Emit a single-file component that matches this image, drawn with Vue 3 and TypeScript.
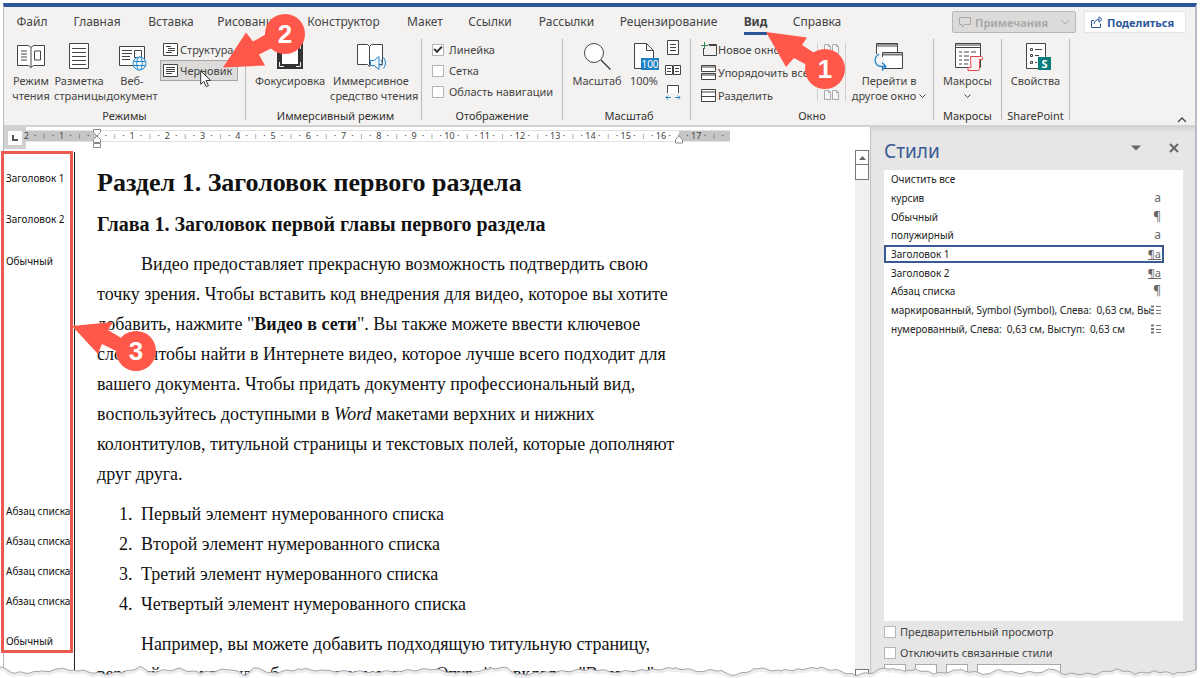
<script setup lang="ts">
import { ref } from 'vue'

interface StyleEntry { name: string; mark: 'none' | 'char' | 'para' | 'linked' | 'list' }

const tabs: string[] = ['Файл', 'Главная', 'Вставка', 'Рисование', 'Конструктор', 'Макет', 'Ссылки', 'Рассылки', 'Рецензирование', 'Вид', 'Справка']
const activeTab = ref('Вид')
const selectedStyle = ref('Заголовок 1')

const styles: StyleEntry[] = [
  { name: 'Очистить все', mark: 'none' },
  { name: 'курсив', mark: 'char' },
  { name: 'Обычный', mark: 'para' },
  { name: 'полужирный', mark: 'char' },
  { name: 'Заголовок 1', mark: 'linked' },
  { name: 'Заголовок 2', mark: 'linked' },
  { name: 'Абзац списка', mark: 'para' },
  { name: 'маркированный, Symbol (Symbol), Слева:  0,63 см, Вы', mark: 'list' },
  { name: 'нумерованный, Слева:  0,63 см, Выступ:  0,63 см', mark: 'list' },
]

const listItems: string[] = ['Первый', 'Второй', 'Третий', 'Четвертый']

// Four marks per centimetre, starting two centimetres left of zero.
const ruler = Array.from({ length: 80 }, (_, i) => {
  if (i % 4 === 0) return i === 8 ? '' : String(Math.abs((i - 8) / 4))
  return i % 4 === 2 ? '|' : '·'
})

const tearAnchors: [number, number][] = [
  [0, 667], [15, 673], [40, 672], [62, 669], [75, 670], [105, 674], [125, 672], [140, 667], [150, 672], [180, 669],
  [200, 673], [230, 669], [245, 675], [255, 668], [272, 673], [300, 669], [325, 671], [375, 672], [400, 671], [433, 669],
  [455, 673], [480, 672], [490, 668], [508, 668], [517, 675], [540, 673], [570, 671], [590, 669], [615, 672], [650, 670],
  [675, 668], [700, 671], [722, 670], [730, 675], [745, 673], [755, 668], [780, 671], [800, 669], [820, 668], [835, 670],
  [855, 675], [870, 673], [885, 668], [895, 669], [905, 672], [915, 669], [935, 674], [960, 670], [985, 674], [1000, 670],
  [1015, 673], [1040, 672], [1050, 669], [1065, 674], [1095, 674], [1118, 669], [1135, 674], [1155, 671], [1175, 674], [1188, 671], [1200, 669],
]
const tearLine = (() => {
  const pts: string[] = []
  for (let k = 0; k < tearAnchors.length - 1; k++) {
    const [x0, y0] = tearAnchors[k]
    const [x1, y1] = tearAnchors[k + 1]
    for (let x = x0; x < x1; x += 3) {
      const y = y0 + ((y1 - y0) * (x - x0)) / (x1 - x0) + Math.sin(x * 1.7) * 0.9 - 660
      pts.push(`${x} ${y.toFixed(1)}`)
    }
  }
  return pts.join(' L')
})()
</script>

<template>
  <div class="page">
    <div class="window">
      <header class="titlebar">
        <nav class="tabs">
          <button v-for="t in tabs" :key="t" type="button" class="tab" :class="{ active: t === activeTab }" @click="activeTab = t"><span>{{ t }}</span></button>
        </nav>
        <div class="actions">
          <button type="button" class="comments" disabled>
            <svg width="12" height="12" viewBox="0 0 12 12" fill="none" stroke="#aaa"><path d="M.5 1.500h11v7h-6l-2.500 2.500v-2.500h-2.500z" /></svg>
            Примечания
            <svg width="10" height="6" viewBox="0 0 10 6" fill="none" stroke="#aaa"><path d="M1 1l4 4 4-4" /></svg>
          </button>
          <button type="button" class="share">
            <svg width="12" height="12" viewBox="0 0 12 12" fill="none" stroke="#2b579a"><path d="M3 4.500h-2.500v7h9v-4M3 8c.5-3 2-4.500 5-4.500M8 .8l3 2.700-3 2.700z" /></svg>
            Поделиться
          </button>
        </div>
      </header>

      <div class="ribbon">
        <section class="group modes">
          <div class="tools">
            <button type="button" class="big">
              <svg width="30" height="30" viewBox="0 0 30 30" fill="none" stroke="#444"><path fill="#fff" d="M1.500 4.500h11l2.500 2 2.500-2h11v20h-11l-2.500 2-2.500-2h-11zM15 6.500v20" /><path d="M5 10h6M5 13h6M5 16h6M5 19h6M18.500 10h6v9h-6z" /></svg>
              Режим<br>чтения
            </button>
            <button type="button" class="big">
              <svg width="30" height="30" viewBox="0 0 30 30" fill="none" stroke="#444"><path fill="#fff" d="M5.500 2.500h19v25h-19z" /><path d="M8 7.500h14M8 11.500h14M8 15.500h14M8 19.500h14M8 23.500h14" /></svg>
              Разметка<br>страницы
            </button>
            <button type="button" class="big">
              <svg width="30" height="30" viewBox="0 0 30 30" fill="none" stroke="#444"><path fill="#fff" d="M2.500 5.500h25v19h-25z" /><path d="M5 9.500h10M5 12.500h10M5 15.500h8M5 18.500h8M17.500 9.500h7v7h-7z" /><g stroke="#2386cc" fill="#f2f7fb"><circle cx="22.500" cy="22.500" r="6.500" /><ellipse cx="22.500" cy="22.500" rx="2.800" ry="6.500" /><path d="M16.500 20.500h12M16.500 24.500h12" /></g></svg>
              Веб-<br>документ
            </button>
            <div class="stack">
              <button type="button" class="small">
                <svg width="16" height="14" viewBox="0 0 16 14" fill="none" stroke="#444"><path fill="#fff" d="M.5.5h14v12H.5z" /><path d="M3 3.500h5M5 5.500h7M5 7.500h7M3 9.500h6" /></svg>
                Структура
              </button>
              <button type="button" class="small pressed">
                <svg width="16" height="14" viewBox="0 0 16 14" fill="none" stroke="#444"><path fill="#fff" d="M.5.5h14v12H.5z" /><path d="M3 3.500h9M3 5.500h9M3 7.500h9M3 9.500h6" /></svg>
                Черновик
              </button>
            </div>
          </div>
          <h2>Режимы</h2>
        </section>

        <section class="group immersive">
          <div class="tools">
            <button type="button" class="big">
              <svg width="30" height="30" viewBox="0 0 30 30"><path fill="#333" d="M2 2h26v26H2z" /><path fill="#fff" d="M7 5h16v18H7z" /><path d="M4.500 21v4.500H9M25.500 21v4.500H21M4.500 8V4.500M25.500 8V4.500" fill="none" stroke="#eee" /></svg>
              Фокусировка
            </button>
            <button type="button" class="big wide">
              <svg width="30" height="30" viewBox="0 0 30 30" fill="none" stroke="#444"><path fill="#fff" d="M13.500 5.500l-2-2h-10v20h10l2 2 2-2h11v-20h-11z" /><path d="M13.500 5.500v19" /><path stroke="#2386cc" fill="#f2f7fb" d="M14.500 19.500h3.500l5-4v13l-5-4h-3.500z" /><path stroke="#2386cc" d="M25 18.500q2.500 3.500 0 7M27.500 16.500q4 5.500 0 11" /></svg>
              Иммерсивное<br>средство чтения
            </button>
          </div>
          <h2>Иммерсивный режим</h2>
        </section>

        <section class="group display">
          <div class="tools checks">
            <label><input type="checkbox" checked>Линейка</label>
            <label><input type="checkbox">Сетка</label>
            <label><input type="checkbox">Область навигации</label>
          </div>
          <h2>Отображение</h2>
        </section>

        <section class="group zooming">
          <div class="tools">
            <button type="button" class="big">
              <svg width="30" height="30" viewBox="0 0 30 30" fill="none" stroke="#444"><circle cx="12" cy="12" r="9.500" fill="#fff" /><path stroke-width="1.500" d="M19 19l9.500 9.500" /></svg>
              Масштаб
            </button>
            <button type="button" class="big">
              <svg width="30" height="30" viewBox="0 0 30 30"><path d="M5.500 2.500h12l7 7v18h-19zM17.500 2.500v7h7" fill="#fff" stroke="#444" /><path fill="#1e7fc2" d="M12 17h18v12H12z" /><text x="21" y="27" text-anchor="middle" font-size="10" fill="#fff">100</text></svg>
              100%
            </button>
            <div class="stack icons">
              <button type="button" aria-label="Одна страница"><svg width="16" height="16" viewBox="0 0 16 16" fill="none" stroke="#444"><path fill="#fff" d="M2.500.5h11v14h-11z" /><path d="M5 4.500h6M5 7.500h6M5 10.500h6" /></svg></button>
              <button type="button" aria-label="Несколько страниц"><svg width="16" height="16" viewBox="0 0 16 16" fill="none" stroke="#444"><path fill="#fff" d="M.5 3.500h7v9h-7zM8.500 3.500h7v9h-7z" /><path d="M2 6.500h4M2 9.500h4M10 6.500h4M10 9.500h4" /></svg></button>
              <button type="button" aria-label="По ширине страницы"><svg width="16" height="16" viewBox="0 0 16 16" fill="none" stroke="#444"><path fill="#fff" d="M2.500 9V1.500h11V9" /><path stroke="#2386cc" d="M1 13.500h5M10 13.500h5M3 11.500l-2 2 2 2M13 11.500l2 2-2 2" /></svg></button>
            </div>
          </div>
          <h2>Масштаб</h2>
        </section>

        <section class="group windows">
          <div class="tools">
            <div class="stack arrange">
              <button type="button" class="small">
                <svg width="16" height="15" viewBox="0 0 16 15" fill="none" stroke="#444"><path d="M2.500 6v7.500h13v-11h-8M8 3.500h7" /><path stroke="#2a8a4c" d="M3.500 0v7M0 3.500h7" /></svg>
                Новое окно
              </button>
              <button type="button" class="small">
                <svg width="16" height="15" viewBox="0 0 16 15" fill="#fff" stroke="#444"><path d="M.5.5h14v6H.5zM.5 8.500h14v6H.5zM1 2h13M1 10h13" /></svg>
                Упорядочить все
              </button>
              <button type="button" class="small">
                <svg width="16" height="15" viewBox="0 0 16 15" fill="#fff" stroke="#444"><path d="M.5 1.500h14v12H.5zM1 4h13M1 8.500h13" /></svg>
                Разделить
              </button>
            </div>
            <div class="stack compare">
              <button v-for="n in ['Рядом', 'Синхронная прокрутка', 'Восстановить расположение']" :key="n" type="button" :aria-label="n">
                <svg width="16" height="12" viewBox="0 0 16 12" fill="#f6f6f6" stroke="#aaa"><path d="M.5 1.500h4l2 2v7h-6zM8.500 1.500h4l2 2v7h-6zM4.500 1.500v2h2M12.500 1.500v2h2" /></svg>
              </button>
            </div>
            <button type="button" class="big switch">
              <svg width="30" height="30" viewBox="0 0 30 30" fill="none" stroke="#444"><path fill="#fff" d="M2.500 13V2.500h21v9M2.500 5h21" /><path d="M3 3.500h20" stroke="#888" /><path fill="#fff" d="M8.500 11.500h20v16h-20z" /><path stroke="#777" stroke-width="2" d="M9 13.500h19" /><path stroke="#f3f2f1" stroke-width="4" d="M8.500 16v9" /><path stroke="#2386cc" stroke-width="1.300" fill="none" d="M5 13c-6 4-5 12 3 12.500h4M8 21.500l4 4-4 4" /></svg>
              Перейти в<br>другое окно <svg class="chev" width="7" height="5" viewBox="0 0 7 5" fill="none" stroke="#444"><path d="M.5.5l3 3 3-3" /></svg>
            </button>
          </div>
          <h2>Окно</h2>
        </section>

        <section class="group narrow">
          <div class="tools">
            <button type="button" class="big">
              <svg width="30" height="30" viewBox="0 0 30 30" fill="none" stroke="#444"><path fill="#fff" d="M2.500 2.500h25v24h-25z" /><path d="M3 4h24M3 6.500h24M6 11h3M11 11h5M18 11h5M6 15h3M11 15h5M6 19h3M11 19h5M6 23h3M11 23h4" /><path fill="#fdf3f3" stroke="#dd4a50" d="M17.500 15.500h11q1.500 0 1 3h-3v9q0 2-2 2h-9.500v-3h3z" /></svg>
              Макросы<br><svg class="chev" width="7" height="5" viewBox="0 0 7 5" fill="none" stroke="#444"><path d="M.5.5l3 3 3-3" /></svg>
            </button>
          </div>
          <h2>Макросы</h2>
        </section>

        <section class="group narrow">
          <div class="tools">
            <button type="button" class="big">
              <svg width="30" height="30" viewBox="0 0 30 30" fill="none" stroke="#444"><path fill="#fff" d="M5.500 2.500h19v25h-19z" /><path d="M9.500 7.500h2v2h-2zM9.500 13.500h2v2h-2zM9.500 20.500h2v2h-2zM14 8.500h7M14 14.500h4M14 21.500h2" /><path fill="#087b7b" stroke="none" d="M17 16h13v13H17z" /><text x="23.500" y="27" text-anchor="middle" font-size="11" font-weight="700" fill="#fff" stroke="none">S</text></svg>
              Свойства
            </button>
          </div>
          <h2>SharePoint</h2>
        </section>
        <button type="button" class="collapse" aria-label="Свернуть ленту"><svg width="10" height="6" viewBox="0 0 10 6" fill="none" stroke="#444" stroke-width="1.300"><path d="M1 5l4-4 4 4" /></svg></button>
      </div>

      <div class="workspace">
        <main class="editor">
          <div class="rulerbar">
            <button type="button" class="tabstop" aria-label="Позиция табуляции"><svg width="6" height="6" viewBox="0 0 6 6"><path d="M1 0v5h5" fill="none" stroke="#555" stroke-width="2" /></svg></button>
            <div class="ruler">
              <div class="marks"><span v-for="(m, i) in ruler" :key="i" :class="{ tick: m === '|' }">{{ m }}</span></div>
              <svg class="indent left" width="10" height="20" viewBox="0 0 10 20" fill="#fff" stroke="#888"><path d="M1.500.5h7v3l-3.500 3.500-3.500-3.500zM5 7l3.500 3.500v3h-7v-3zM1.500 14.500h7v4h-7z" /></svg>
              <svg class="indent right" width="10" height="9" viewBox="0 0 10 9" fill="#fff" stroke="#888"><path d="M5 .8l3.500 3.700v3.500h-7v-3.500z" /></svg>
            </div>
          </div>
          <div class="docrow">
            <article class="doc">
              <div class="row first"><span class="tag">Заголовок 1</span><h1>Раздел 1. Заголовок первого раздела</h1></div>
              <div class="row second"><span class="tag">Заголовок 2</span><h3>Глава 1. Заголовок первой главы первого раздела</h3></div>
              <div class="row para">
                <span class="tag">Обычный</span>
                <p>Видео предоставляет прекрасную возможность подтвердить свою<br>точку зрения. Чтобы вставить код внедрения для видео, которое вы хотите<br>добавить, нажмите "<b>Видео в сети</b>". Вы также можете ввести ключевое<br>слово, чтобы найти в Интернете видео, которое лучше всего подходит для<br>вашего документа. Чтобы придать документу профессиональный вид,<br>воспользуйтесь доступными в <i>Word</i> макетами верхних и нижних<br>колонтитулов, титульной страницы и текстовых полей, которые дополняют<br>друг друга.</p>
              </div>
              <div v-for="(item, i) in listItems" :key="item" class="row item" :class="{ start: i === 0 }">
                <span class="tag">Абзац списка</span>
                <div class="numbered"><span class="num">{{ i + 1 }}.</span><span>{{ item }} элемент нумерованного списка</span></div>
              </div>
              <div class="row last"><span class="tag">Обычный</span><p>Например, вы можете добавить подходящую титульную страницу,<br>верхний колонтитул и боковое примечание. Откройте вкладку "Вставка"</p></div>
            </article>
            <div class="scroll">
              <button type="button" class="up" aria-label="Прокрутить вверх"><svg width="7" height="4" viewBox="0 0 7 4"><path d="M0 4l3.500-4 3.500 4z" fill="#666" /></svg></button>
              <div class="thumb"></div>
              <div class="down"></div>
            </div>
          </div>
        </main>

        <aside class="panel">
          <div class="panelhead">
            <h2>Стили</h2>
            <button type="button" aria-label="Параметры области"><svg width="10" height="6" viewBox="0 0 10 6"><path d="M0 .5h10l-5 5z" fill="#666" /></svg></button>
            <button type="button" aria-label="Закрыть"><svg width="10" height="10" viewBox="0 0 10 10"><path d="M1 1l8 8M9 1l-8 8" stroke="#666" stroke-width="2" /></svg></button>
          </div>
          <div class="listbox">
            <ul>
              <li v-for="s in styles" :key="s.name">
                <button type="button" :class="{ selected: s.name === selectedStyle }" @click="selectedStyle = s.name">
                  <span class="sname">{{ s.name }}</span>
                  <span v-if="s.mark === 'char'" class="mark">a</span>
                  <span v-else-if="s.mark === 'para'" class="mark">¶</span>
                  <span v-else-if="s.mark === 'linked'" class="mark linked">¶a</span>
                  <svg v-else-if="s.mark === 'list'" width="10" height="10" viewBox="0 0 10 10" fill="none" stroke="#777"><path stroke-width="2" d="M0 1.500h3M0 5h3M0 8.500h3" /><path d="M5 1.500h5M5 5.500h5M5 8.500h5" /></svg>
                </button>
              </li>
            </ul>
          </div>
          <label class="opt"><input type="checkbox">Предварительный просмотр</label>
          <label class="opt"><input type="checkbox">Отключить связанные стили</label>
          <div class="panelbuttons">
            <button type="button" aria-label="Создать стиль"></button>
            <button type="button" aria-label="Инспектор стилей">A</button>
            <button type="button" aria-label="Управление стилями">A</button>
            <button type="button" class="params" aria-label="Параметры"></button>
          </div>
        </aside>
      </div>
    </div>

    <svg class="tear" viewBox="0 0 1200 18" preserveAspectRatio="none" aria-hidden="true">
      <path :d="`M${tearLine} L1200 18 L0 18z`" fill="#fff" />
      <path :d="`M${tearLine}`" fill="none" stroke="#d9d9de" stroke-width="3" transform="translate(0 2)" opacity=".5" />
      <path :d="`M${tearLine}`" fill="none" stroke="#a3a3aa" />
    </svg>

    <div class="frame"></div>
    <svg class="cursor" width="12" height="18" viewBox="0 0 12 18"><path d="M.7.8v13.500l3.200-3 2.300 5.400 2.200-1-2.300-5.200h4.500z" fill="#fff" stroke="#333" /></svg>
    <div class="callout c1">
      <svg width="81" height="59" viewBox="0 0 81 59" fill="#ff584a"><path d="M0 1l41 5.500-5 7.500 20 13-6 12-22-12-8 9z" /></svg>
      <span>1</span>
    </div>
    <div class="callout c2">
      <svg width="83" height="56" viewBox="0 0 83 56" fill="#ff584a"><path d="M0 53.500l23-35 7 9 23-13 7 14-24 12 6 11z" /></svg>
      <span>2</span>
    </div>
    <div class="callout c3">
      <svg width="85" height="47" viewBox="0 0 85 47" fill="#ff584a"><path d="M0 2l41-4-5 8 20 12-6 12-20-10-4 10z" /></svg>
      <span>3</span>
    </div>
  </div>
</template>

<style>
body { margin: 0; background: #fff; }
</style>

<style scoped>
* { box-sizing: border-box; }
.page { position: relative; height: 100vh; overflow: hidden; background: #fff; padding: 3px 3px 0; font-family: "Noto Sans", "Open Sans", sans-serif; font-size: 11px; color: #444; }
button { font: inherit; color: inherit; background: none; border: 0; padding: 0; }
h1, h2, h3, p, ul { margin: 0; padding: 0; }
svg { display: block; flex: none; }
.window { height: 100%; display: flex; flex-direction: column; border-top: 4px solid #2b579a; border-left: 1px solid #b9bcc4; border-right: 2px solid #b9bcc4; }

.titlebar { flex: none; display: flex; justify-content: space-between; height: 32px; background: #f3f2f1; }
.tabs { display: grid; grid-template-columns: 56px 74px 74px 81px 109px 54px 76px 77px 127px 47px 76px; font-size: 12px; }
.tab { display: flex; justify-content: center; white-space: nowrap; padding-top: 5px; }
.tab span { line-height: 20px; height: 23px; }
.tab.active { font-weight: 700; }
.tab.active span { border-bottom: 3px solid #2b579a; }
.actions { display: flex; gap: 8px; padding: 4px 9px 4px 0; font-weight: 700; }
.actions button { display: flex; align-items: center; gap: 4px; height: 22px; }
.comments { border: 1px solid #b8b8b8; background: #dcdbda; color: #aaa; padding: 0 5px 0 6px; width: 124px; border-radius: 2px; }
.comments svg:last-child { margin-left: auto; }
.share { background: #fff; color: #2b579a; border: 1px solid #e6e5e4; padding: 0 6px; width: 102px; }

.ribbon { flex: none; display: flex; height: 88px; background: #f3f2f1; border-bottom: 2px solid #d4d2d0; }
.group { display: flex; flex-direction: column; border-right: 1px solid #bdbbb9; margin-bottom: 5px; flex: none; }
.group h2 { font-size: 11px; font-weight: 400; line-height: 16px; margin-bottom: -4px; text-align: center; color: #333; white-space: nowrap; }
.tools { display: flex; flex: 1; min-height: 0; padding-top: 2px; align-items: flex-start; }
.modes { width: 242px; padding-left: 4px; }
.immersive { width: 176px; padding-left: 4px; }
.display { width: 141px; padding-left: 10px; }
.zooming { width: 128px; padding-left: 5px; }
.windows { width: 243px; padding-left: 10px; }
.narrow { width: 68px; }
.modes h2 { margin-left: -4px; }
.display h2, .windows h2 { margin-left: -10px; }
.big { text-align: center; min-width: 36px; line-height: 15px; white-space: nowrap; }
.big > svg:first-child { margin: 0 auto 2px; }
.big .chev { display: inline-block; vertical-align: 1px; }
.modes .big { width: 46px; }
.modes .big:nth-child(2) { width: 50px; }
.modes .big:nth-child(3) { width: 56px; }
.immersive .big { width: 80px; }
.immersive .wide { width: 82px; }
.zooming .big:first-child { width: 58px; }
.narrow .big { width: 100%; }
.stack { display: flex; flex-direction: column; }
.small { display: flex; align-items: center; gap: 1px; height: 21px; white-space: nowrap; padding: 0 2px; border: 1px solid transparent; }
.small.pressed { background: #dddcdb; border-color: #a9a7a5; }
.modes .stack { width: 78px; margin-top: -2px; }
.icons { gap: 6px; margin-left: 3px; margin-top: -1px; }
.arrange { width: 117px; margin-top: -2px; gap: 2px; }
.arrange .small { padding: 0; border: 0; gap: 1px; }
.compare { width: 29px; margin-left: -1px; margin-top: 2px; height: 58px; border-left: 1px solid #d2d0ce; border-right: 1px solid #d2d0ce; justify-content: space-between; align-items: center; }
.switch { width: 86px; }
.checks { flex-direction: column; padding-top: 0; }
.checks label { display: flex; align-items: center; gap: 5px; height: 21px; white-space: nowrap; }
input { appearance: none; margin: 0; width: 12px; height: 12px; border: 1px solid #b5b5b5; background: #fff; flex: none; display: grid; place-items: center; }
input:checked::before { content: ""; width: 6px; height: 3px; border: solid #333; border-width: 0 0 2px 2px; transform: rotate(-45deg); margin-top: -2px; }
.collapse { margin: auto 8px 2px auto; }

.workspace { flex: 1; min-height: 0; display: flex; }
.editor { flex: 1; min-width: 0; display: flex; flex-direction: column; background: #fff; }
.rulerbar { flex: none; display: flex; height: 25px; }
.tabstop { width: 22px; height: 22px; border: 4px solid #d0d0d0; background: #fff; display: grid; place-items: center; }
.ruler { position: relative; width: 704px; height: 12px; margin-top: 3px; background: linear-gradient(90deg, #c6c6c6 71px, #fff 71px, #fff 653px, #c6c6c6 653px); border-top: 1px solid #e2e2e2; border-bottom: 1px solid #e2e2e2; }
.marks { display: grid; grid-template-columns: repeat(80, minmax(0, 1fr)); margin: 0 3px 0 -4px; font-size: 9px; line-height: 10px; color: #444; }
.marks span { display: flex; justify-content: center; white-space: nowrap; }
.marks .tick { font-size: 6px; }
.indent { position: absolute; top: -2px; }
.indent.left { left: 66px; }
.indent.right { left: 648px; top: 4px; }
.docrow { flex: 1; min-height: 0; display: flex; }
.doc { flex: 1; min-width: 0; overflow: hidden; color: #111; font-family: "Liberation Serif", serif; font-size: 18px; line-height: 30px; }
.row { display: grid; grid-template-columns: 71px 1fr; }
.row > :nth-child(2) { padding-left: 22px; white-space: nowrap; }
.tag { font: 10px/22px "Noto Sans", sans-serif; padding-left: 2px; border-right: 1px solid #222; white-space: nowrap; }
.first > * { padding-top: 11px; }
.first h1 { font-size: 26px; line-height: 40px; }
.first .tag { padding-top: 15px; }
.second h3 { font-size: 20px; line-height: 42px; }
.second .tag { padding-top: 5px; }
.para p { padding-top: 4px; }
.para .tag { padding-top: 5px; }
.item .tag { padding-top: 1px; }
.numbered { display: flex; }
.num { width: 22px; flex: none; }
.row > .numbered { padding-left: 44px; }
.start > .numbered { padding-top: 10px; }
.start .tag { padding-top: 11px; }
.last p { padding-top: 10px; }
.last .tag { padding-top: 11px; }
.para p, .last p { text-indent: 44px; }
.scroll { width: 15px; background: #f0f0f0; display: flex; flex-direction: column; margin-top: -2px; }
.up, .thumb, .down { width: 14px; height: 15px; border: 1px solid #777; background: #fff; display: grid; place-items: center; }
.thumb { height: 16px; margin-top: -1px; }
.down { margin-top: auto; height: 9px; }

.panel { width: 325px; flex: none; background: #e6e6e6; border-left: 1px solid #c3c3c3; padding: 6px 12px 0 13px; display: flex; flex-direction: column; box-shadow: inset 0 4px 4px -2px #d0d0d0; }
.panelhead { display: flex; align-items: center; height: 37px; flex: none; }
.panelhead h2 { font-size: 19px; font-weight: 400; line-height: 30px; color: #3a5a94; flex: 1; margin-top: -2px; }
.panelhead button { margin-bottom: 7px; margin-right: 4px; }
.panelhead button:last-child { margin-left: 24px; }
.listbox { background: #fff; flex: 1; min-height: 0; color: #222; }
.listbox ul { list-style: none; display: grid; grid-auto-rows: 1fr; height: 168px; width: 280px; }
.listbox li { display: grid; }
.listbox button { display: flex; align-items: center; justify-content: space-between; padding: 0 2px 0 6px; font-size: 10px; text-align: left; white-space: pre; border: 1px solid transparent; }
.listbox button.selected { border: 2px solid #3a5a94; padding: 0 1px 0 5px; }
.mark { color: #666; font-size: 12px; line-height: 14px; }
.linked { font-size: 11px; line-height: 11px; border-bottom: 1px solid #666; }
.opt { display: flex; align-items: center; gap: 4px; height: 21px; flex: none; }
.panelbuttons { flex: none; display: flex; gap: 9px; height: 14px; margin-top: 1px; }
.panelbuttons button { width: 22px; height: 22px; border: 1px solid #a9a9a9; background: #fff; font-weight: 700; line-height: 12px; }
.panelbuttons .params { width: 84px; }

.tear { position: absolute; left: 0; bottom: 0; width: 100%; height: 18px; }
.frame { position: absolute; left: 1px; top: 151px; width: 72px; height: 502px; border: 3px solid #ea5a50; }
.cursor { position: absolute; left: 200px; top: 70px; }
.callout { position: absolute; }
.callout svg { overflow: visible; }
.callout span { position: absolute; width: 40px; height: 40px; border-radius: 50%; background: #ff584a; color: #fff; font: 700 26px/40px "Liberation Sans", sans-serif; text-align: center; }
.c1 { left: 766px; top: 31px; }
.c1 span { left: 39px; top: 18px; }
.c2 { left: 223px; top: 14px; }
.c2 span { left: 42px; top: 0; }
.c3 { left: 72px; top: 324px; }
.c3 span { left: 44px; top: 7px; }
</style>
